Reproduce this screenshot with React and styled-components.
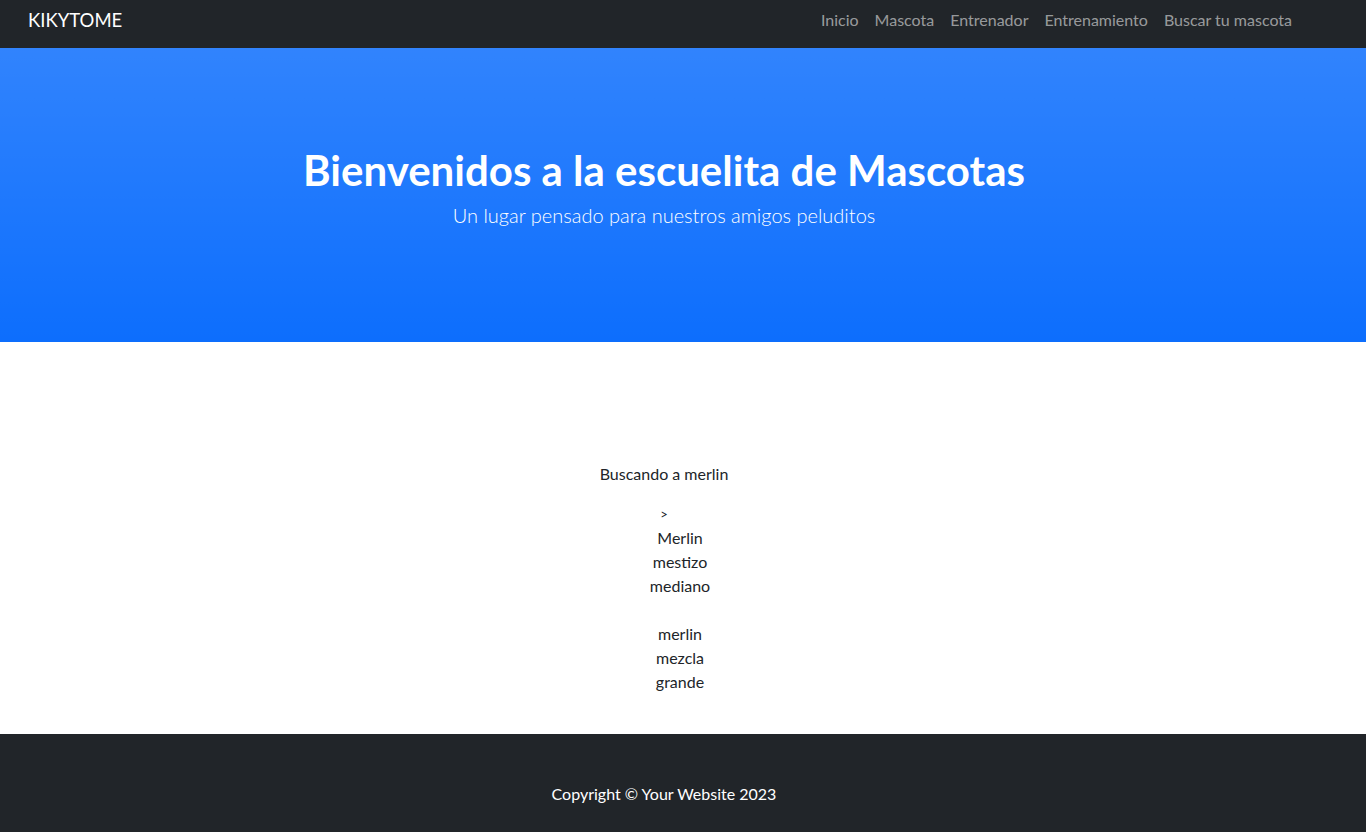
import React from 'react';
import styled, { createGlobalStyle } from 'styled-components';

const GlobalStyle = createGlobalStyle`
  html, body {
    margin: 0;
    padding: 0;
  }
  body {
    font-family: Lato, "Noto Sans", "Liberation Sans", sans-serif;
    font-size: 16px;
    line-height: 1.5;
    color: #212529;
    background: #fff;
    overflow: hidden;
  }
`;

const Nav = styled.nav`
  height: 48px;
  background: #212529;
  display: flex;
  align-items: center;
  justify-content: space-between;
  padding: 0 66px 0 28px;
  box-sizing: border-box;
`;

const Brand = styled.a`
  color: #fff;
  font-size: 18.5px;
  line-height: 30px;
  text-decoration: none;
  margin-top: -8px;
`;

const NavLinks = styled.ul`
  display: flex;
  list-style: none;
  margin: -9px 0 0;
  padding: 0;
`;

const NavLink = styled.a`
  display: block;
  padding: 8px;
  color: rgba(255, 255, 255, 0.55);
  text-decoration: none;
  font-size: 16px;
  line-height: 24px;
`;

const Hero = styled.header`
  background-color: #0d6efd;
  background-image: linear-gradient(180deg, rgba(255, 255, 255, 0.15), rgba(255, 255, 255, 0));
  height: 294px;
  box-sizing: border-box;
  padding: 94px 38px 0 0;
  text-align: center;
  color: #fff;
`;

const Title = styled.h1`
  margin: 0;
  font-size: 42px;
  font-weight: 700;
  line-height: 57.6px;
`;

const Lead = styled.p`
  margin: 0;
  font-size: 20px;
  font-weight: 300;
  line-height: 30px;
  color: #fff;
`;

const Results = styled.section`
  height: 392px;
  box-sizing: border-box;
  padding: 120px 38px 0 0;
  text-align: center;
`;

const Searching = styled.p`
  margin: 0 0 16px;
`;

const Marker = styled.div`
  font-size: 13px;
  line-height: 24px;
`;

const PetList = styled.ul`
  list-style: none;
  margin: 0;
  padding-left: 32px;
`;

const Pet = styled.li`
  & + & {
    margin-top: 24px;
  }
`;

const Footer = styled.footer`
  background: #212529;
  height: 98px;
  box-sizing: border-box;
  padding: 48px 38px 0 0;
  text-align: center;
  color: #fff;
`;

const pets = [
  { name: 'Merlin', raza: 'mestizo', tamano: 'mediano' },
  { name: 'merlin', raza: 'mezcla', tamano: 'grande' },
];

const links = ['Inicio', 'Mascota', 'Entrenador', 'Entrenamiento', 'Buscar tu mascota'];

export default function App() {
  return (
    <>
      <GlobalStyle />
      <Nav>
        <Brand href="#">KIKYTOME</Brand>
        <NavLinks>
          {links.map((l) => (
            <li key={l}>
              <NavLink href="#">{l}</NavLink>
            </li>
          ))}
        </NavLinks>
      </Nav>
      <Hero>
        <Title>Bienvenidos a la escuelita de Mascotas</Title>
        <Lead>Un lugar pensado para nuestros amigos peluditos</Lead>
      </Hero>
      <Results>
        <Searching>Buscando a merlin</Searching>
        <Marker>&gt;</Marker>
        <PetList>
          {pets.map((p, i) => (
            <Pet key={i}>
              <div>{p.name}</div>
              <div>{p.raza}</div>
              <div>{p.tamano}</div>
            </Pet>
          ))}
        </PetList>
      </Results>
      <Footer>Copyright © Your Website 2023</Footer>
    </>
  );
}
